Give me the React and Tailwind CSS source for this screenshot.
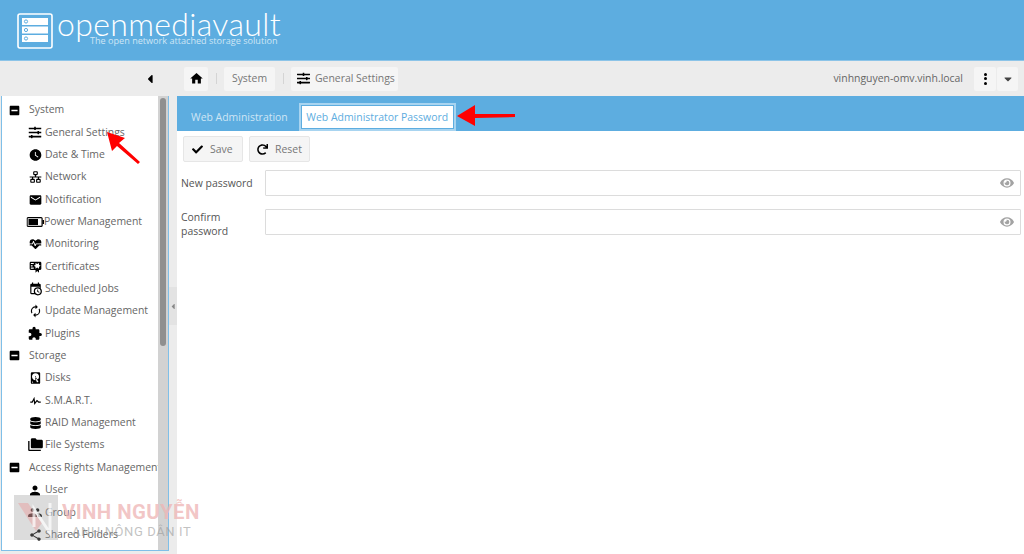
import React from "react";
import { MdWatchLater, MdEmail, MdExtension, MdFolderCopy, MdPerson, MdPeople, MdShare } from "react-icons/md";
import { FaCheck, FaEye, FaCaretDown, FaCaretLeft, FaDatabase, FaMinusSquare, FaRedo, FaSlidersH } from "react-icons/fa";

const P = ({ d, size = 14, className = "" }) => (
  <svg viewBox="0 0 24 24" width={size} height={size} fill="currentColor" className={className}><path d={d} /></svg>
);
const home = "M10,20V14H14V20H19V12H22L12,3L2,12H5V20H10Z";
const lan = "M10,2C8.89,2 8,2.89 8,4V7C8,8.11 8.89,9 10,9H11V11H2V13H6V15H5C3.89,15 3,15.89 3,17V20C3,21.11 3.89,22 5,22H9C10.11,22 11,21.11 11,20V17C11,15.89 10.11,15 9,15H8V13H16V15H15C13.89,15 13,15.89 13,17V20C13,21.11 13.89,22 15,22H19C20.11,22 21,21.11 21,20V17C21,15.89 20.11,15 19,15H18V13H22V11H13V9H14C15.11,9 16,8.11 16,7V4C16,2.89 15.11,2 14,2H10M10,4H14V7H10V4M5,17H9V20H5V17M15,17H19V20H15V17Z";
const heart = "M7.5,4A5.5,5.5 0 0,0 2,9.5C2,10 2.09,10.5 2.22,11H6.3L7.57,7.63C7.87,6.83 9.05,6.75 9.43,7.63L11.5,13L12.09,11.58C12.22,11.25 12.57,11 13,11H21.78C21.91,10.5 22,10 22,9.5A5.5,5.5 0 0,0 16.5,4C14.64,4 15,5.04 12,6.5C9,5.04 9.36,4 7.5,4M3,12.5A1,1 0 0,0 2,13.5A1,1 0 0,0 3,14.5H5.44L11,20C12,20.9 12,20.9 13,20L18.56,14.5H21A1,1 0 0,0 22,13.5A1,1 0 0,0 21,12.5H13.4L12.47,14.8C12.07,15.81 10.92,15.67 10.55,14.83L8.5,9.5L7.54,11.83C7.39,12.21 7.05,12.5 6.6,12.5H3Z";
const cert = "M4,3C2.89,3 2,3.89 2,5V15A2,2 0 0,0 4,17H12V22L15,19L18,22V17H20A2,2 0 0,0 22,15V8L22,6V5A2,2 0 0,0 20,3H16V3H4M12,5L15,7L18,5V8.5L21,10L18,11.5V15L15,13L12,15V11.5L9,10L12,8.5V5M4,5H9V7H4V5M4,9H7V11H4V9M4,13H9V15H4V13Z";
const cal = "M15,13H16.5V15.82L18.94,17.23L18.19,18.53L15,16.69V13M19,8H5V19H9.67C9.24,18.09 9,17.07 9,16A7,7 0 0,1 16,9C17.07,9 18.09,9.24 19,9.67V8M5,21C3.89,21 3,20.1 3,19V5C3,3.89 3.89,3 5,3H6V1H8V3H16V1H18V3H19A2,2 0 0,1 21,5V11.1C22.24,12.36 23,14.09 23,16A7,7 0 0,1 16,23C14.09,23 12.36,22.24 11.1,21H5M16,11.15A4.85,4.85 0 0,0 11.15,16C11.15,18.68 13.32,20.85 16,20.85A4.85,4.85 0 0,0 20.85,16C20.85,13.32 18.68,11.15 16,11.15Z";
const renew = "M12,6V9L16,5L12,1V4A8,8 0 0,0 4,12C4,13.57 4.46,15.03 5.24,16.26L6.7,14.8C6.25,13.97 6,13 6,12A6,6 0 0,1 12,6M18.76,7.74L17.3,9.2C17.74,10.04 18,11 18,12A6,6 0 0,1 12,18V15L8,19L12,23V20A8,8 0 0,0 20,12C20,10.43 19.54,8.97 18.76,7.74Z";
const disk = "M6,2H18A2,2 0 0,1 20,4V20A2,2 0 0,1 18,22H6A2,2 0 0,1 4,20V4A2,2 0 0,1 6,2M12,4A6,6 0 0,0 6,10C6,13.31 8.69,16 12.1,16L11.22,13.77C10.95,13.29 11.11,12.68 11.59,12.4L12.45,11.9C12.93,11.63 13.54,11.79 13.82,12.27L15.74,14.69C17.12,13.59 18,11.9 18,10A6,6 0 0,0 12,4M12,9A1,1 0 0,1 13,10A1,1 0 0,1 12,11A1,1 0 0,1 11,10A1,1 0 0,1 12,9M7,18A1,1 0 0,0 6,19A1,1 0 0,0 7,20A1,1 0 0,0 8,19A1,1 0 0,0 7,18M12.09,13.27L14.58,19.58L17.17,18.08L12.95,12.77L12.09,13.27Z";
const pulse = "M3,13H5.79L10.1,4.79L11.28,13.75L14.5,9.66L17.83,13H21V15H17L14.67,12.67L9.92,18.73L8.94,11.31L7,15H3V13Z";

const Battery = () => (
  <svg width="18" height="10" viewBox="0 0 18 10" className="text-black">
    <rect x="0.6" y="0.6" width="15" height="8.8" rx="1" fill="none" stroke="currentColor" strokeWidth="1.2" />
    <rect x="2" y="2" width="9.5" height="6" fill="currentColor" />
    <rect x="16" y="3" width="1.6" height="4" fill="currentColor" />
  </svg>
);

const Logo = () => (
  <svg width="36" height="36" viewBox="0 0 36 36" className="shrink-0">
    <rect x="1" y="1" width="34" height="34" rx="2" fill="none" stroke="#fff" strokeWidth="1.6" />
    {[5, 13.5, 22].map((y) => (
      <g key={y}>
        <rect x="5" y={y} width="26" height="7" fill="#fff" />
        <circle cx="9" cy={y + 3.5} r="1.6" fill="none" stroke="#5dade0" strokeWidth="1" />
      </g>
    ))}
  </svg>
);

const Group = ({ label }) => (
  <div className="flex h-[22.35px] items-center">
    <FaMinusSquare size={11} className="ml-[7px] text-black shrink-0" />
    <span className="ml-[9px] whitespace-nowrap">{label}</span>
  </div>
);
const Item = ({ icon, label, tight }) => (
  <div className="flex h-[22.35px] items-center">
    <span className="ml-[24px] w-[19px] flex justify-center shrink-0 text-black -translate-x-[0.5px]">{icon}</span>
    <span className={tight ? "whitespace-nowrap -ml-[1px]" : "whitespace-nowrap"}>{label}</span>
  </div>
);

const Chip = ({ children, className = "" }) => (
  <div className={`h-[24px] flex items-center bg-[#f5f5f5] rounded-[2px] whitespace-nowrap ${className}`}>{children}</div>
);
const Sep = () => <div className="w-px h-[11px] bg-[#d4d4d4] mx-[7.5px]" />;

const Field = ({ label, tall }) => (
  <div className={`flex items-center ${tall ? "mt-[12px]" : "mt-0"}`}>
    <div className={`w-[88px] pl-[4px] leading-[13.5px] text-[#555] ${tall ? "translate-y-[3px]" : "translate-y-[1px]"}`}>{label}</div>
    <div className="flex-1 h-[26px] border border-[#dcdcdc] flex items-center justify-end pr-[6px] bg-white rounded-[1px]">
      <FaEye size={14} className="text-[#a3a3a3]" />
    </div>
  </div>
);

export default function App() {
  return (
    <div className="relative w-[1024px] h-[554px] overflow-hidden flex flex-col bg-[#ececec] text-[10.45px] text-[#666] font-['Open_Sans',sans-serif]">
      <header className="h-[61px] shrink-0 bg-[#5dade0] border-b border-[#8cc4e8] flex items-start pl-[17px] pt-[13px]">
        <Logo />
        <div className="relative ml-[4px] h-[36px] w-[230px] text-white">
          <div className="text-[32px] leading-[30px] font-light font-['Lato',sans-serif] tracking-[0.35px] whitespace-nowrap -mt-[4px]">openmediavault</div>
          <div className="absolute left-[33px] top-[22px] text-[9.1px] leading-[12px] text-[#cfe6f5] whitespace-nowrap">The open network attached storage solution</div>
        </div>
      </header>

      <div className="h-[35px] shrink-0 flex items-center">
        <div className="w-[177px] flex justify-end pr-[20px]">
          <FaCaretLeft size={14} className="text-black" />
        </div>
        <div className="flex items-center ml-[7px] flex-1 pr-[6px]">
          <Chip className="w-[24px] justify-center"><P d={home} size={15} className="text-black" /></Chip>
          <Sep />
          <Chip className="w-[51px] justify-center text-[#777]">System</Chip>
          <Sep />
          <Chip className="w-[107px] pl-[6px] text-[#777]"><FaSlidersH size={13} className="text-black mr-[5px]" />General Settings</Chip>
          <div className="ml-auto text-[#666] mr-[11px]">vinhnguyen-omv.vinh.local</div>
          <Chip className="w-[22px] justify-center"><div className="flex flex-col gap-[1.5px]"><i className="block w-[3px] h-[3px] bg-black rounded-full" /><i className="block w-[3px] h-[3px] bg-black rounded-full" /><i className="block w-[3px] h-[3px] bg-black rounded-full" /></div></Chip>
          <Chip className="w-[21px] justify-center ml-px"><FaCaretDown size={12} className="text-[#444]" /></Chip>
        </div>
      </div>

      <div className="flex-1 min-h-0 flex items-stretch">
        <aside className="w-[168px] ml-[1px] shrink-0 mb-[3px] border border-t-0 border-[#7fbfe8] bg-white flex overflow-hidden">
          <div className="w-[156px] overflow-hidden pt-[3px]">
            <Group label="System" />
            <Item icon={<FaSlidersH size={13} />} label="General Settings" />
            <Item icon={<MdWatchLater size={14} />} label="Date & Time" />
            <Item icon={<P d={lan} size={14} />} label="Network" />
            <Item icon={<MdEmail size={14} />} label="Notification" />
            <Item icon={<Battery />} label="Power Management" tight />
            <Item icon={<P d={heart} size={14} />} label="Monitoring" />
            <Item icon={<P d={cert} size={14} />} label="Certificates" />
            <Item icon={<P d={cal} size={14} />} label="Scheduled Jobs" />
            <Item icon={<P d={renew} size={14} />} label="Update Management" />
            <Item icon={<MdExtension size={15} />} label="Plugins" />
            <Group label="Storage" />
            <Item icon={<P d={disk} size={14} />} label="Disks" />
            <Item icon={<P d={pulse} size={14} />} label="S.M.A.R.T." />
            <Item icon={<FaDatabase size={12} />} label="RAID Management" />
            <Item icon={<MdFolderCopy size={16} />} label="File Systems" />
            <Group label="Access Rights Management" />
            <Item icon={<MdPerson size={15} />} label="User" />
            <Item icon={<MdPeople size={15} />} label="Group" />
            <Item icon={<MdShare size={14} />} label="Shared Folders" />
          </div>
          <div className="w-[10px] bg-[#d2d2d2] pt-[2px] flex justify-center">
            <div className="w-[6px] h-[248px] rounded-full bg-[#8f8f8f]" />
          </div>
        </aside>
        <div className="w-[8px] shrink-0 flex items-center">
          <div className="w-[8px] h-[38px] -mt-[38px] bg-[#e3e3e3] flex items-center justify-center">
            <FaCaretLeft size={9} className="text-[#888]" />
          </div>
        </div>
        <main className="flex-1 min-w-0 bg-white">
          <div className="h-[35px] bg-[#5dade0] flex items-end pl-[14px] text-[10.45px]">
            <div className="h-[28px] pt-[2px] flex items-center text-[#cfe6f5] whitespace-nowrap">Web Administration</div>
            <div className="ml-[11px] h-[28px] w-[157px] bg-white border-2 border-[#a8d4f0] text-[#5dade0] whitespace-nowrap">
              <div className="h-full w-full pt-[2px] border border-[#5dade0] flex items-center justify-center">Web Administrator Password</div>
            </div>
          </div>
          <div className="flex gap-[6px] pl-[6px] pt-[5px]">
            <div className="w-[60px] h-[26px] bg-[#f5f5f5] border border-[#e6e6e6] rounded-[2px] flex items-center pl-[8px] gap-[7px] text-[#777]"><FaCheck size={11} className="text-black" /><span className="mt-[2px]">Save</span></div>
            <div className="w-[61px] h-[26px] bg-[#f5f5f5] border border-[#e6e6e6] rounded-[2px] flex items-center pl-[7px] gap-[7px] text-[#777]"><FaRedo size={11} className="text-black" /><span className="mt-[2px]">Reset</span></div>
          </div>
          <div className="pt-[8px] pr-[3px]">
            <Field label="New password" />
            <Field label={<>Confirm<br />password</>} tall />
          </div>
        </main>
      </div>

      {/* annotation arrows */}
      <svg className="absolute left-0 top-0 pointer-events-none" width="1024" height="554" viewBox="0 0 1024 554">
        <path d="M107 132 L125 138 L119 143 L140 162 L138 164 L117 146 L112 151 Z" fill="#f00" />
        <path d="M457 116 L475 105 L475 114 L515 114 L515 117 L475 118 L475 126 Z" fill="#f00" />
      </svg>

      {/* watermark */}
      <div className="absolute left-[14px] top-[495px] w-[44px] h-[45px] bg-[#9a9a9a]/35 flex items-center justify-center pointer-events-none">
        <svg width="44" height="45" viewBox="0 0 44 45">
          <path d="M4 8 L22 36 L28 28 L14 8 Z" fill="#e88" fillOpacity="0.35" />
          <path d="M20 32 L20 14 L36 38 L36 8" fill="none" stroke="#fff" strokeOpacity="0.7" strokeWidth="3" />
        </svg>
      </div>
      <div className="absolute left-[62px] top-[500px] text-[20.4px] leading-[24px] font-bold text-[#eeb4b4]/75 whitespace-nowrap font-['Roboto',sans-serif] tracking-[0.4px] pointer-events-none">VINH NGUYỄN</div>
      <div className="absolute left-[72px] top-[524px] text-[13px] leading-[16px] font-normal text-[#999]/60 whitespace-nowrap font-['Roboto',sans-serif] tracking-[0.6px] pointer-events-none">ANH NÔNG DÂN IT</div>
    </div>
  );
}
